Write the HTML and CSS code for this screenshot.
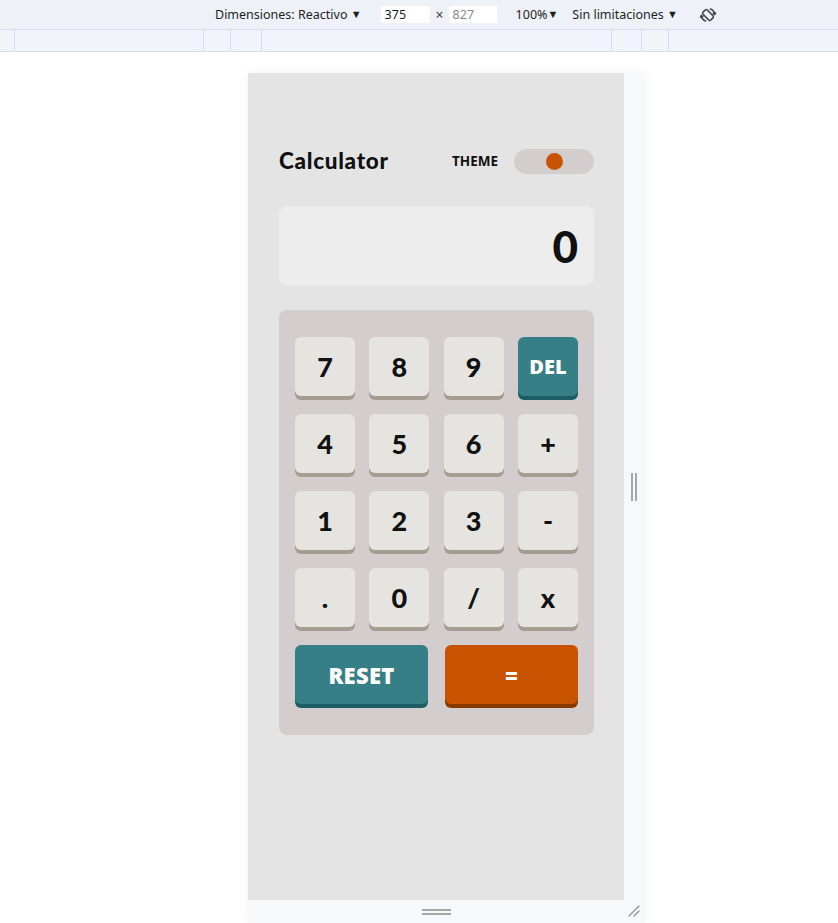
FILE: index.html
```html
<!DOCTYPE html>
<html lang="es">
<head>
<meta charset="utf-8">
<title>Calculator</title>
<link rel="stylesheet" href="styles.css">
</head>
<body>
<div class="toolbar">
  <span class="tb-item">Dimensiones: Reactivo <span class="caret">▼</span></span>
  <span class="tb-input">375</span>
  <span class="tb-x">×</span>
  <span class="tb-input dim">827</span>
  <span class="tb-item zoom">100%<span class="caret">▼</span></span>
  <span class="tb-item">Sin limitaciones <span class="caret">▼</span></span>
  <svg class="rotate" width="20" height="20" viewBox="0 0 20 20">
    <g transform="rotate(-45 10 10)" fill="none" stroke="#444" stroke-width="1.6" stroke-linecap="round">
      <rect x="7" y="4.5" width="6" height="11" rx="1.5"/>
      <path d="M4 12.5 A6.5 6.5 0 0 1 4.8 5.8"/>
      <path d="M16 7.5 A6.5 6.5 0 0 1 15.2 14.2"/>
      <path d="M3.2 6.2 L4.8 5.8 L5.2 7.4"/>
      <path d="M16.8 13.8 L15.2 14.2 L14.8 12.6"/>
    </g>
  </svg>
</div>
<div class="ruler">
  <span class="seg s1"></span>
  <span class="seg s2"></span>
  <span class="seg s3"></span>
  <span class="seg s4"></span>
  <span class="seg s5"></span>
  <span class="seg s6"></span>
  <span class="seg s7"></span>
  <span class="seg s8"></span>
</div>
<div class="stage">
  <div class="device">
    <div class="device-row">
      <div class="viewport">
        <div class="calc">
          <div class="header">
            <h1 class="title">Calculator</h1>
            <div class="theme">
              <span class="theme-label">THEME</span>
              <div class="toggle"><span class="dot"></span></div>
            </div>
          </div>
          <div class="display">0</div>
          <div class="keypad">
            <button class="key">7</button>
            <button class="key">8</button>
            <button class="key">9</button>
            <button class="key key-teal">DEL</button>
            <button class="key">4</button>
            <button class="key">5</button>
            <button class="key">6</button>
            <button class="key">+</button>
            <button class="key">1</button>
            <button class="key">2</button>
            <button class="key">3</button>
            <button class="key">-</button>
            <button class="key">.</button>
            <button class="key">0</button>
            <button class="key">/</button>
            <button class="key">x</button>
            <button class="key key-teal key-wide reset">RESET</button>
            <button class="key key-orange key-wide">=</button>
          </div>
        </div>
      </div>
      <div class="side-strip"><span class="vhandle"></span></div>
    </div>
    <div class="bottom-strip">
      <span class="hhandle"></span>
      <svg class="corner" width="14" height="14" viewBox="0 0 14 14">
        <path d="M2 12 L12 2 M7 12 L12 7" stroke="#999" stroke-width="1.5" stroke-linecap="round"/>
      </svg>
    </div>
  </div>
</div>
</body>
</html>
```
FILE: styles.css
```css
* { box-sizing: border-box; }
html, body { margin: 0; padding: 0; background: #ffffff; }
body {
  font-family: "Open Sans", "Liberation Sans", sans-serif;
  width: 838px;
  height: 923px;
  overflow: hidden;
}

/* DevTools toolbar */
.toolbar {
  height: 30px;
  background: #eef1f8;
  border-bottom: 1px solid #d6dcea;
  display: flex;
  align-items: center;
  padding-left: 215px;
  font-size: 12.5px;
  color: #1f1f1f;
  font-family: "Noto Sans", "Open Sans", sans-serif;
}
.tb-item { white-space: nowrap; }
.caret { font-size: 11px; position: relative; top: -1px; }
.tb-input {
  background: #ffffff;
  width: 49px;
  height: 17px;
  line-height: 17px;
  padding-left: 4px;
  margin-left: 19px;
  border-radius: 2px;
}
.tb-input.dim { color: #8a8a8a; margin-left: 5px; width: 48px; }
.tb-x { margin-left: 6px; color: #444; font-size: 14px; }
.zoom { margin-left: 19px; margin-right: 14px; }
.rotate { margin-left: 20px; }

/* ruler row */
.ruler {
  height: 22px;
  background: #f1f4fa;
  border-bottom: 1px solid #d6dcea;
  display: flex;
}
.seg { height: 100%; border-right: 1px solid #d3dbec; }
.s1 { width: 15px; }
.s2 { width: 189px; }
.s3 { width: 27px; }
.s4 { width: 31px; }
.s5 { width: 350px; }
.s6 { width: 30px; }
.s7 { width: 27px; }
.s8 { flex: 1; border-right: none; }

/* stage */
.stage {
  padding-top: 21px;
  padding-left: 248px;
}
.device {
  width: 397px;
  box-shadow: 0 0 10px rgba(0, 0, 0, 0.06);
}
.device-row { display: flex; }
.viewport {
  width: 376px;
  height: 827px;
  background: #e5e4e4;
}
.side-strip {
  width: 21px;
  background: #f7f8fc;
  display: flex;
  align-items: center;
  justify-content: center;
}
.vhandle {
  width: 6px;
  height: 28px;
  border-left: 2px solid #a6a6a6;
  border-right: 2px solid #a6a6a6;
  margin-left: -2px;
}
.bottom-strip {
  height: 23px;
  background: #f7f8fc;
  display: flex;
  align-items: center;
  position: relative;
}
.hhandle {
  width: 29px;
  height: 6px;
  border-top: 2px solid #a6a6a6;
  border-bottom: 2px solid #a6a6a6;
  margin-left: 174px;
}
.corner { position: absolute; right: 4px; bottom: 5px; }

/* calculator */
.calc {
  width: 315px;
  margin-left: 31px;
  padding-top: 76px;
  font-family: "Lato", "Open Sans", sans-serif;
}
.header {
  display: flex;
  align-items: center;
  justify-content: space-between;
  height: 25px;
}
.title {
  margin: 0;
  font-size: 22.5px;
  font-weight: 900;
  color: #111;
  letter-spacing: 0.7px;
  position: relative;
  top: -1px;
}
.theme { display: flex; align-items: center; gap: 16px; }
.theme-label {
  font-family: "Open Sans", sans-serif;
  font-size: 13.5px;
  font-weight: 700;
  color: #111;
  position: relative;
  top: -1px;
}
.toggle {
  width: 80px;
  height: 25px;
  border-radius: 13px;
  background: #d3cdcd;
  display: flex;
  align-items: center;
  justify-content: center;
}
.dot {
  width: 17px;
  height: 17px;
  border-radius: 50%;
  background: #c85402;
}
.display {
  margin-top: 32px;
  height: 79px;
  border-radius: 8px;
  background: #ededed;
  display: flex;
  align-items: center;
  justify-content: flex-end;
  padding-right: 16px;
  font-size: 44px;
  font-weight: 900;
  color: #111;
}
.keypad {
  margin-top: 25px;
  background: #d3cdcd;
  border-radius: 8px;
  padding: 27px 16px 31px;
  display: grid;
  grid-template-columns: repeat(4, 60px);
  justify-content: space-between;
  row-gap: 18px;
}
.key {
  height: 59px;
  border: none;
  border-radius: 6px;
  background: #e5e4e0;
  box-shadow: 0 4px 0 #a69d91;
  font-family: "Lato", "Open Sans", sans-serif;
  font-size: 27px;
  font-weight: 900;
  color: #111;
  padding: 0;
  display: flex;
  align-items: center;
  justify-content: center;
}
.key-teal {
  background: #377f86;
  box-shadow: 0 4px 0 #1b5f65;
  color: #ffffff;
  font-family: "Open Sans", sans-serif;
  font-size: 20px;
  font-weight: 800;
}
.key-orange {
  background: #c85402;
  box-shadow: 0 4px 0 #873901;
  color: #ffffff;
  font-family: "Open Sans", sans-serif;
  font-size: 22px;
  font-weight: 800;
}
.key-wide { grid-column: span 2; width: 133px; }
.key-orange.key-wide { justify-self: end; }
.reset { font-size: 22px; letter-spacing: 0.3px; }
```
